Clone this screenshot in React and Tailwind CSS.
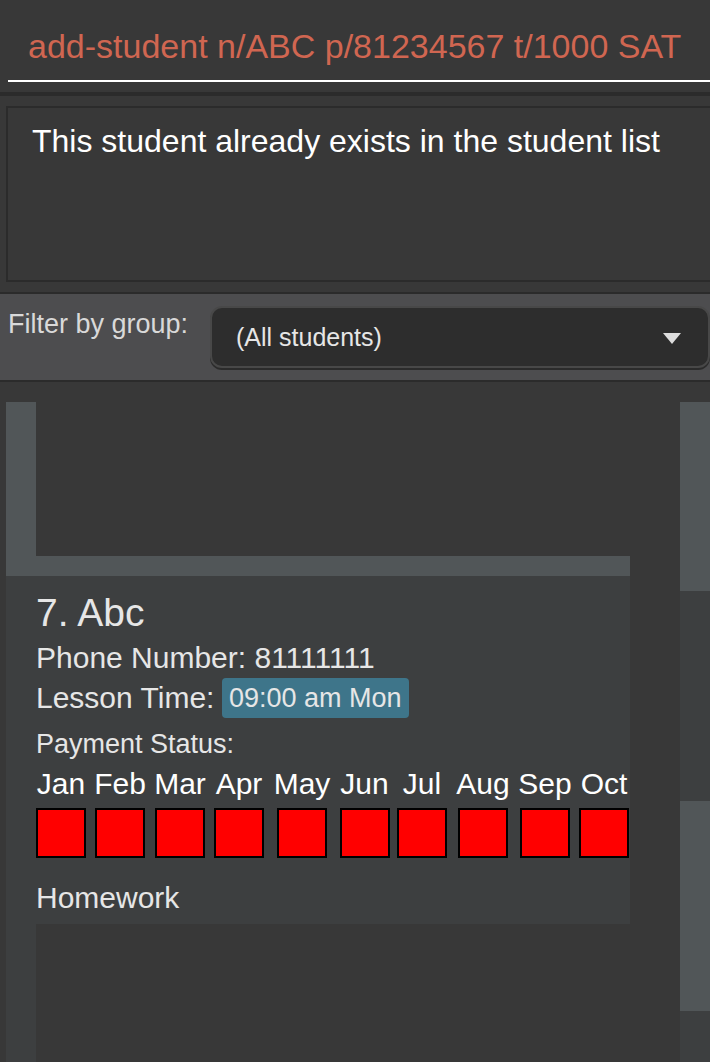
const months = ["Jan", "Feb", "Mar", "Apr", "May", "Jun", "Jul", "Aug", "Sep", "Oct"];

function CommandBox() {
  return (
    <div className="border-b-4 border-[#2b2b2b] pb-[10px] pl-2">
      <input
        type="text"
        aria-label="Command"
        defaultValue="add-student n/ABC p/81234567 t/1000 SAT"
        className="block h-[82px] w-full border-b-2 border-white bg-transparent pt-4 pb-1 pl-5 text-[34px] text-[#d06651] outline-none"
      />
    </div>
  );
}

function ResultDisplay() {
  return (
    <div className="border-b-2 border-[#2b2b2b] py-[10px] pl-[6px]">
      <textarea
        readOnly
        aria-label="Result"
        value="This student already exists in the student list"
        className="block h-[176px] w-full resize-none overflow-hidden border-2 border-r-0 border-[#2b2b2b] bg-transparent py-3 pl-6 text-[32px] leading-[42px] whitespace-nowrap text-white outline-none"
      />
    </div>
  );
}

function GroupFilter() {
  return (
    <div className="flex items-start border-b-2 border-[#2b2b2b] bg-[#4d4d4f] py-3 pl-2">
      <label htmlFor="group" className="w-[202px] shrink-0 text-[27px] leading-9 text-[#d9d9d9]">
        Filter by group:
      </label>
      <div className="relative flex-1">
        <select
          id="group"
          className="block h-[62px] w-full appearance-none rounded-xl border-2 border-[#484848] bg-[#2d2d2d] pt-[2px] pl-6 text-[25px] text-[#e6e6e6] shadow-[0_2px_0_#2b2b2b] outline-none"
        >
          <option>(All students)</option>
        </select>
        <svg viewBox="0 0 18 11" className="pointer-events-none absolute top-[27px] right-[29px] h-[11px] w-[18px]" aria-hidden="true">
          <path d="M0 0H18L9 11Z" fill="#dddddd" />
        </svg>
      </div>
    </div>
  );
}

function PaymentStatus() {
  return (
    <ul className="grid grid-cols-[50px_52px_52px_50px_60px_49px_50px_56px_52px_50px] gap-x-2">
      {months.map((month) => (
        <li key={month} className="flex flex-col items-center gap-1 text-[30px] leading-10 text-white">
          <span className="whitespace-nowrap">{month}</span>
          <span className="size-[50px] border-2 border-black bg-[#ff0000]" />
        </li>
      ))}
    </ul>
  );
}

function StudentCard() {
  return (
    <article className="h-[348px] pt-[14px] pl-[30px] text-[#e6e6e6]">
      <h2 className="text-[39px] leading-[46px]">7. Abc</h2>
      <p className="pt-[2px] text-[30px] leading-10">Phone Number: 81111111</p>
      <div className="flex text-[30px] leading-10">
        <span className="w-[186px]">Lesson Time:</span>
        <span className="rounded bg-[#3e758a] px-[7px] text-[27px]">09:00 am Mon</span>
      </div>
      <p className="pt-[6px] text-[27px] leading-10">Payment Status:</p>
      <PaymentStatus />
      <p className="pt-5 text-[30px] leading-10">Homework</p>
    </article>
  );
}

export default function App() {
  return (
    <div className="flex min-h-screen flex-col overflow-x-hidden bg-[#383838] font-['Liberation_Sans',sans-serif]">
      <CommandBox />
      <ResultDisplay />
      <GroupFilter />
      <main className="flex flex-1 gap-[50px] pt-5 pl-[6px]">
        <section aria-label="Students" className="flex min-w-0 flex-1 flex-col">
          <div className="h-[174px] bg-[#515658] pb-5 pl-[30px]">
            <div className="h-full bg-[#383838]" />
          </div>
          <div className="flex flex-1 flex-col bg-[#3d3f40]">
            <StudentCard />
            <div className="flex flex-1 pl-[30px]">
              <div className="flex-1 bg-[#383838]" />
            </div>
          </div>
        </section>
        <section aria-label="Lessons" className="flex w-[30px] flex-col">
          <div className="h-[189px] bg-[#515658]" />
          <div className="h-[210px] bg-[#3d3f40]" />
          <div className="h-[210px] bg-[#515658]" />
          <div className="flex-1 bg-[#3d3f40]" />
        </section>
      </main>
    </div>
  );
}
